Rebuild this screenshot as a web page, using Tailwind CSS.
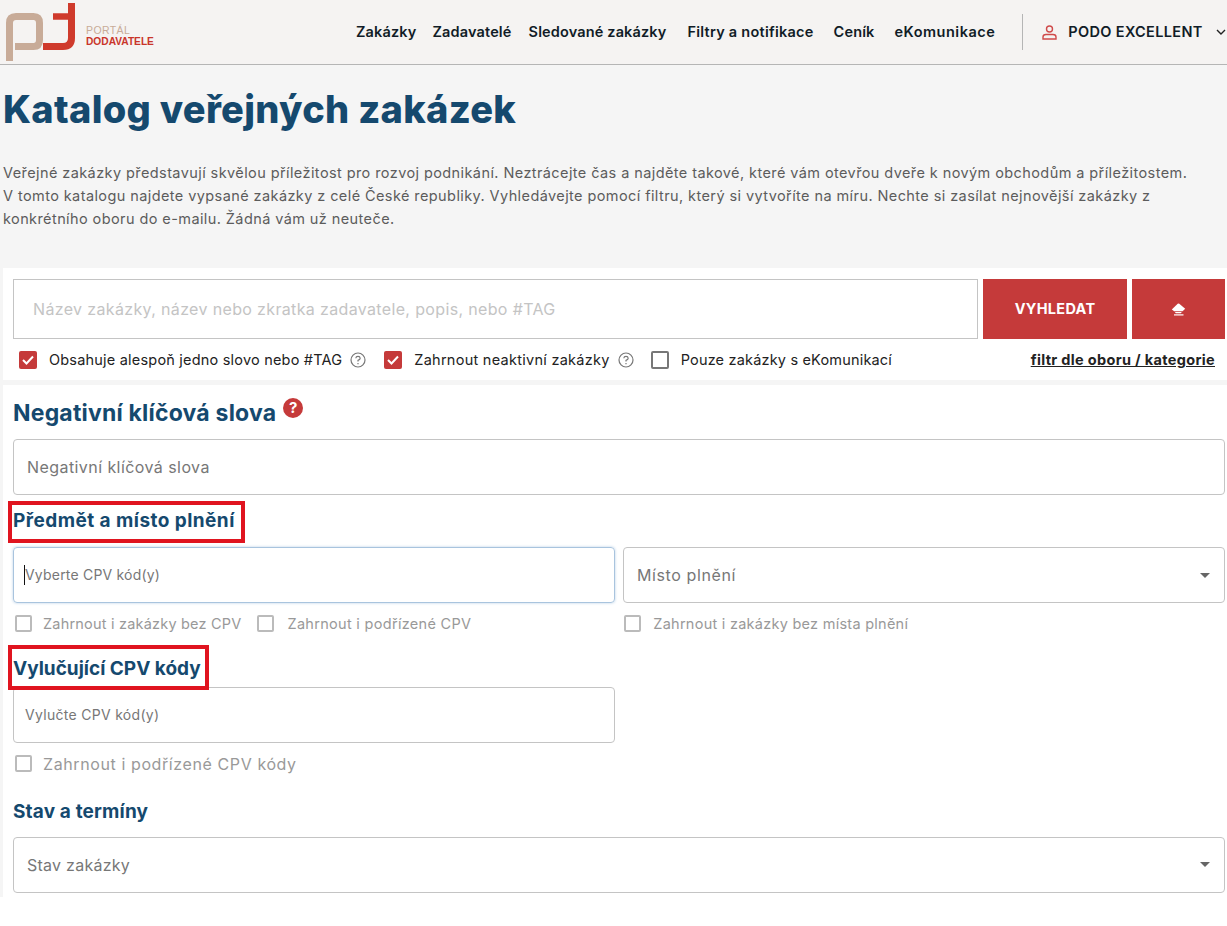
<!DOCTYPE html>
<html lang="en">
<head>
	<meta charset="UTF-8">
	<script src="https://cdn.jsdelivr.net/npm/@tailwindcss/browser@4"></script>
	<title>Katalog veřejných zakázek</title>
</head>
<body class="bg-white font-['Inter',sans-serif] text-[#1b2a38] overflow-hidden">
	<div class="h-[926px] overflow-hidden">
		<!-- Navbar -->
		<header class="h-[65px] bg-[#f5f3f2] border-b border-[#b5b5b5] flex items-center">
			<svg class="shrink-0 w-[86px] h-[64px]" viewBox="0 0 86 64" fill="none">
				<path d="M9.500 61V23Q9.500 16.500 16 16.500H33.500Q39.500 16.500 39.500 23V40Q39.500 46.500 33.500 46.500H15" stroke="#c8ab98" stroke-width="7"/>
				<path d="M71.500 3V38Q71.500 46.500 63 46.500H43" stroke="#cf3a2c" stroke-width="7"/>
				<path d="M71 16.500H53" stroke="#cf3a2c" stroke-width="6.500"/>
			</svg>
			<div class="shrink-0 w-[270px] mt-[7px] text-[10.5px] leading-[11px] font-['Liberation_Sans',sans-serif]">
				<div class="text-[#c8ab98] tracking-[0.4px]">PORTÁL</div>
				<div class="text-[#c9352b] font-bold text-[10.2px]">DODAVATELE</div>
			</div>
			<nav class="shrink-0 flex items-center text-[14.5px] tracking-[0.15px] font-semibold text-[#111c27] whitespace-nowrap">
				<a href="#">Zakázky</a>
				<a href="#" class="ml-[16px]">Zadavatelé</a>
				<a href="#" class="ml-[17px]">Sledované zakázky</a>
				<a href="#" class="ml-[21px] tracking-[0.25px]">Filtry a notifikace</a>
				<a href="#" class="ml-[20px]">Ceník</a>
				<a href="#" class="ml-[20px] tracking-[0.5px]">eKomunikace</a>
			</nav>
			<div class="shrink-0 ml-[27px] w-px h-[36px] bg-[#b5b5b5]"></div>
			<svg class="shrink-0 ml-[19px] w-[15px] h-[15px]" viewBox="0 0 15 15" fill="none" stroke="#cf4a4a" stroke-width="1.4">
				<circle cx="7.500" cy="4" r="3"/>
				<path d="M1 14V12Q1 9.500 4 9.500H11Q14 9.500 14 12V14Z"/>
			</svg>
			<span class="shrink-0 ml-[11px] text-[14.5px] tracking-[0.35px] font-semibold text-[#111c27] whitespace-nowrap">PODO EXCELLENT</span>
			<svg class="shrink-0 ml-[13px] w-[10px] h-[7px]" viewBox="0 0 10 7" fill="none" stroke="#222" stroke-width="1.4"><path d="M1 1l4 4 4-4"/></svg>
		</header>

		<div class="bg-[#f5f5f5] h-[832px] pl-[3px]">
			<h1 class="pt-[22px] text-[38px] leading-[44px] tracking-[0.3px] font-extrabold text-[#15496e]">Katalog veřejných zakázek</h1>
			<p class="mt-[30px] text-[14.5px] leading-[23px] tracking-[0.41px] text-[#5c5c5c] whitespace-nowrap">
				Veřejné zakázky představují skvělou příležitost pro rozvoj podnikání. Neztrácejte čas a najděte takové, které vám otevřou dveře k novým obchodům a příležitostem.<br>
				V tomto katalogu najdete vypsané zakázky z celé České republiky. Vyhledávejte pomocí filtru, který si vytvoříte na míru. Nechte si zasílat nejnovější zakázky z<br>
				konkrétního oboru do e-mailu. Žádná vám už neuteče.
			</p>

			<!-- Search -->
			<section class="mt-[38px] bg-white h-[112px] pt-[11px] pl-[10px] pr-[2px]">
				<div class="flex gap-[5px]">
					<div class="w-[965px] h-[60px] border border-[#c4c4c4] bg-white flex items-center pl-[19px] text-[16px] tracking-[0.35px] text-[#c4c4c4] whitespace-nowrap">Název zakázky, název nebo zkratka zadavatele, popis, nebo #TAG</div>
					<button class="w-[144px] h-[60px] bg-[#c53a3a] text-white text-[14.5px] tracking-[0.3px] font-bold">VYHLEDAT</button>
					<button class="w-[93px] h-[60px] bg-[#c53a3a] flex items-center justify-center">
						<svg class="w-[15px] h-[13px]" viewBox="0 0 15 13" fill="#fff">
							<path d="M.8 6.500L6.700.8Q7.500.2 8.300.8L14.200 5.800 11.500 8.200H3.200Z"/>
							<path d="M3.800 9H10.800L9.800 10.200H4.800Z"/>
							<path d="M3 11.300H12.500V12.500H3Z"/>
						</svg>
					</button>
				</div>
				<div class="flex items-center mt-[10px] ml-[6px] text-[14.5px] text-[#222] whitespace-nowrap">
					<span class="shrink-0 w-[18px] h-[18px] rounded-[2px] bg-[#c53a3a] flex items-center justify-center">
						<svg class="w-[12px] h-[10px]" viewBox="0 0 12 10" fill="none" stroke="#fff" stroke-width="2"><path d="M1 5l3.500 3.500L11 1.500"/></svg>
					</span>
					<span class="ml-[12px] tracking-[0.2px]">Obsahuje alespoň jedno slovo nebo #TAG</span>
					<svg class="shrink-0 ml-[8px] w-[16px] h-[16px]" viewBox="0 0 16 16" fill="none" stroke="#777" stroke-width="1.2"><circle cx="8" cy="8" r="7"/><path d="M5.800 6.200Q6 4.300 8 4.300T10.200 6.200Q10.200 7.300 8 8.400V9.600"/><path d="M8 11v1.300"/></svg>
					<span class="shrink-0 ml-[18px] w-[18px] h-[18px] rounded-[2px] bg-[#c53a3a] flex items-center justify-center">
						<svg class="w-[12px] h-[10px]" viewBox="0 0 12 10" fill="none" stroke="#fff" stroke-width="2"><path d="M1 5l3.500 3.500L11 1.500"/></svg>
					</span>
					<span class="ml-[12px] tracking-[0.27px]">Zahrnout neaktivní zakázky</span>
					<svg class="shrink-0 ml-[8px] w-[16px] h-[16px]" viewBox="0 0 16 16" fill="none" stroke="#777" stroke-width="1.2"><circle cx="8" cy="8" r="7"/><path d="M5.800 6.200Q6 4.300 8 4.300T10.200 6.200Q10.200 7.300 8 8.400V9.600"/><path d="M8 11v1.300"/></svg>
					<span class="shrink-0 ml-[17px] w-[18px] h-[18px] rounded-[2px] border-2 border-[#777]"></span>
					<span class="ml-[12px] tracking-[0.18px]">Pouze zakázky s eKomunikací</span>
					<a href="#" class="ml-auto mr-[10px] font-bold tracking-[0.33px] underline text-[#222]">filtr dle oboru / kategorie</a>
				</div>
			</section>

			<!-- Filters -->
			<section class="mt-[5px] bg-white h-[512px] pl-[10px] pr-[2px] relative">
				<div class="flex items-start pt-[13px]">
					<h2 class="text-[23px] leading-[30px] tracking-[0.2px] font-bold text-[#15496e]">Negativní klíčová slova</h2>
					<span class="ml-[7px] w-[20px] h-[20px] rounded-full bg-[#c53a3a] text-white text-[15px] leading-[20px] font-bold text-center">?</span>
				</div>
				<div class="mt-[11px] w-[1212px] h-[56px] border border-[#c4c4c4] rounded-[4px] flex items-center pl-[13px] text-[16px] tracking-[0.43px] text-[#777]">Negativní klíčová slova</div>

				<h3 class="mt-[13px] text-[19px] leading-[26px] tracking-[0.45px] font-bold text-[#15496e]">Předmět a místo plnění</h3>
				<div class="mt-[13px] flex gap-[8px]">
					<div class="w-[602px] h-[56px] border border-[#a9c4de] rounded-[4px] shadow-[0_0_3px_#b9d0e6] flex items-center pl-[10px] text-[14px] tracking-[0.2px] text-[#777]">
						<span class="border-l border-[#111] leading-[20px]">Vyberte CPV kód(y)</span>
					</div>
					<div class="w-[602px] h-[56px] border border-[#c4c4c4] rounded-[4px] flex items-center pl-[13px] pr-[14px] text-[16px] tracking-[0.6px] text-[#777]">
						<span>Místo plnění</span>
						<span class="ml-auto w-0 h-0 border-x-[5px] border-x-transparent border-t-[5px] border-t-[#666]"></span>
					</div>
				</div>
				<div class="mt-[10px] flex items-center text-[14.5px] text-[#999] whitespace-nowrap">
					<span class="shrink-0 ml-[2px] w-[17px] h-[17px] rounded-[2px] border-2 border-[#bbb]"></span>
					<span class="ml-[11px] tracking-[0.2px]">Zahrnout i zakázky bez CPV</span>
					<span class="shrink-0 ml-[16px] w-[17px] h-[17px] rounded-[2px] border-2 border-[#bbb]"></span>
					<span class="ml-[13px] tracking-[0.3px]">Zahrnout i podřízené CPV</span>
					<span class="shrink-0 ml-[153px] w-[17px] h-[17px] rounded-[2px] border-2 border-[#bbb]"></span>
					<span class="ml-[12px] tracking-[0.26px]">Zahrnout i zakázky bez místa plnění</span>
				</div>

				<h3 class="mt-[21px] text-[19px] leading-[26px] font-bold text-[#15496e]">Vylučující CPV kódy</h3>
				<div class="mt-[5px] w-[602px] h-[56px] border border-[#c4c4c4] rounded-[4px] flex items-center pl-[11px] text-[14px] tracking-[0.3px] text-[#777]">Vylučte CPV kód(y)</div>
				<div class="mt-[9px] flex items-center text-[16px] tracking-[0.6px] text-[#999] whitespace-nowrap">
					<span class="shrink-0 ml-[2px] w-[17px] h-[17px] rounded-[2px] border-2 border-[#bbb]"></span>
					<span class="ml-[11px]">Zahrnout i podřízené CPV kódy</span>
				</div>

				<h3 class="mt-[23px] text-[19px] leading-[26px] tracking-[0.15px] font-bold text-[#15496e]">Stav a termíny</h3>
				<div class="mt-[12px] w-[1212px] h-[56px] border border-[#c4c4c4] rounded-[4px] flex items-center pl-[13px] pr-[14px] text-[16px] tracking-[0.25px] text-[#777]">
					<span>Stav zakázky</span>
					<span class="ml-auto w-0 h-0 border-x-[5px] border-x-transparent border-t-[5px] border-t-[#666]"></span>
				</div>

				<!-- red annotation boxes -->
				<div class="absolute left-[5px] top-[116px] w-[237px] h-[42px] border-[4px] border-[#e0141f]"></div>
				<div class="absolute left-[5px] top-[260px] w-[201px] h-[45px] border-[4px] border-[#e0141f]"></div>
			</section>
		</div>
	</div>
</body>
</html>
